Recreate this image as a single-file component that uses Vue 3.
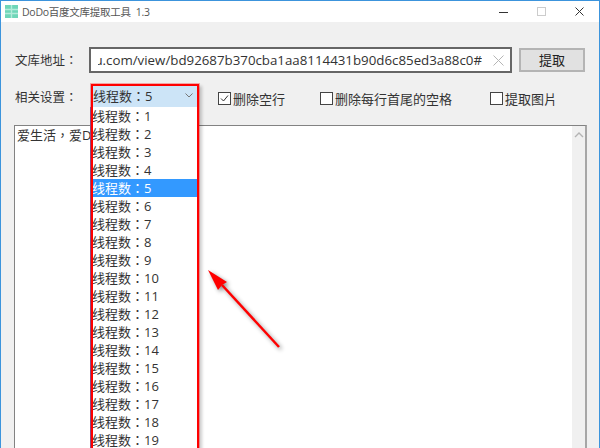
<script setup>
const counts = Array.from({ length: 19 }, (_, i) => i + 1)
</script>

<template>
  <div class="window">
    <header class="titlebar">
      <svg class="logo" width="13" height="13" viewBox="0 0 13 13">
        <rect x="0" y="0" width="13" height="13" fill="#6fd6b8" />
        <path d="M0 4.5h13M0 8.5h13M6.5 0v13" stroke="#b4ebda" stroke-width="1.4" />
      </svg>
      <span class="title">DoDo百度文库提取工具&nbsp;&nbsp;1.3</span>
      <div class="controls">
        <svg width="9" height="9" viewBox="0 0 9 9"><path d="M0 5.5h9" stroke="#333" stroke-width="1" /></svg>
        <svg width="9" height="9" viewBox="0 0 9 9"><rect x=".5" y=".5" width="8" height="8" fill="none" stroke="#ccc" /></svg>
        <svg width="9" height="9" viewBox="0 0 9 9"><path d="M.5 .5l8 8M8.5 .5l-8 8" stroke="#333" stroke-width="1" /></svg>
      </div>
    </header>
    <main class="body">
      <div class="row url-row">
        <label class="label">文库地址：</label>
        <div class="input">
          <div class="url-clip"><span class="url">u.com/view/bd92687b370cba1aa8114431b90d6c85ed3a88c0#</span></div>
          <svg class="clear" width="11" height="11" viewBox="0 0 11 11"><path d="M.5 .5l10 10M10.5 .5l-10 10" stroke="#b5b5b5" stroke-width="1" /></svg>
        </div>
        <button class="fetch">提取</button>
      </div>
      <div class="row settings-row">
        <label class="label">相关设置：</label>
        <div class="select">
          <span>线程数：5</span>
          <svg width="8" height="5" viewBox="0 0 8 5"><path d="M.5 .5L4 4 7.500 .5" fill="none" stroke="#777" /></svg>
        </div>
        <label class="check first"><span class="box"><svg width="11" height="11" viewBox="0 0 11 11"><path d="M2 5.5l2.500 2.500L9 2.500" fill="none" stroke="#333" /></svg></span>删除空行</label>
        <label class="check second"><span class="box"></span>删除每行首尾的空格</label>
        <label class="check third"><span class="box"></span>提取图片</label>
      </div>
      <div class="output">
        <div class="text">爱生活，爱DoDo</div>
        <div class="scrollbar">
          <svg width="10" height="6" viewBox="0 0 10 6"><path d="M1 5l4-4 4 4" fill="none" stroke="#b4b4b4" stroke-width="1.4" /></svg>
        </div>
      </div>
    </main>

    <ul class="list">
      <li v-for="n in counts" :key="n" :class="{ active: n === 5 }">线程数：{{ n }}</li>
    </ul>
    <div class="highlight"></div>
    <svg class="arrow" width="90" height="100" viewBox="0 0 90 100">
      <path d="M77 87L20 25" stroke="#f00" stroke-width="2.500" />
      <path d="M6 10l19 12-5 3-4 5z" fill="#f00" />
    </svg>
  </div>
</template>

<style>
html, body { margin: 0; overflow: hidden; }
</style>

<style scoped>
.window {
  position: relative;
  box-sizing: border-box;
  width: 600px;
  height: 448px;
  overflow: hidden;
  display: flex;
  flex-direction: column;
  background: #f0f0f0;
  border: 1px solid #3c94dc;
  border-bottom: 0;
  font-family: "Open Sans", "Noto Sans CJK TC", sans-serif;
  font-size: 13px;
  color: #333;
}
.titlebar {
  height: 21px;
  flex: none;
  display: flex;
  align-items: center;
  background: #fff;
  padding-left: 4px;
  font-size: 10.5px;
  color: #555;
}
.title { letter-spacing: -.25px; }
.logo { margin-right: 4px; }
.controls {
  margin-left: auto;
  display: flex;
  gap: 29px;
  padding-right: 15px;
}
.body {
  flex: 1;
  min-height: 0;
  display: flex;
  flex-direction: column;
  padding: 25px 12px 0 13px;
}
.row { display: flex; align-items: center; }
.label { width: 75px; flex: none; padding-left: 1px; box-sizing: border-box; font-size: 12.5px; }
.url-row { height: 26px; }
.url-row .label { padding-bottom: 1px; }
.input {
  box-sizing: border-box;
  width: 423px;
  height: 26px;
  background: #fff;
  border: 2px solid #666;
  display: flex;
  align-items: center;
  padding: 0 5px 0 7px;
  font-size: 13.3px;
  overflow: hidden;
}
.url-clip {
  width: 384px;
  flex: none;
  display: flex;
  justify-content: flex-end;
  overflow: hidden;
}
.url { white-space: nowrap; flex: none; }
.clear { margin-left: 11px; flex: none; }
.fetch {
  box-sizing: border-box;
  margin-left: 7px;
  width: 66px;
  height: 24px;
  padding: 0 0 2px;
  background: #e1e1e1;
  border: 2px solid #b4b4b4;
  font: inherit;
  color: #222;
}
.settings-row { height: 24px; margin-top: 11px; }
.select {
  box-sizing: border-box;
  width: 108px;
  height: 24px;
  flex: none;
  margin-left: 1px;
  padding: 0 5px 0 3px;
  display: flex;
  align-items: center;
  justify-content: space-between;
  background: #cce4f7;
  border-bottom: 1px solid #0078d7;
}
.check { display: flex; align-items: center; white-space: nowrap; padding-top: 4px; }
.box {
  box-sizing: border-box;
  width: 13px;
  height: 13px;
  margin-right: 2px;
  display: flex;
  background: #fff;
  border: 1px solid #444;
}
.first { margin-left: 20px; }
.second { margin-left: 35px; }
.third { margin-left: 38px; }
.output {
  box-sizing: border-box;
  margin-top: 17px;
  width: 573px;
  flex: 1;
  min-height: 0;
  display: flex;
  justify-content: space-between;
  background: #fff;
  border: 1px solid #828282;
  border-right: 2px solid #a6a6a6;
  border-bottom: 0;
}
.text { padding: 0 2px; line-height: 19px; }
.scrollbar {
  width: 13px;
  background: #f0f0f0;
  display: flex;
  justify-content: center;
  padding-top: 6px;
}
.list {
  position: absolute;
  left: 89px;
  top: 106px;
  width: 108px;
  margin: 0;
  padding: 0;
  list-style: none;
  background: #fff;
  border-left: 1px solid #5b6fb5;
  box-sizing: border-box;
  line-height: 18px;
}
.list li { height: 18px; padding-left: 1px; white-space: nowrap; }
.list .active { background: #3399ff; color: #fff; }
.highlight {
  position: absolute;
  left: 90px;
  top: 83px;
  width: 104px;
  height: 380px;
  border: 2px solid #f00;
  box-shadow: 0 0 0 1px rgba(255, 0, 0, .3), 3px 2px 3px rgba(0, 0, 0, .2);
}
.arrow {
  position: absolute;
  left: 201px;
  top: 259px;
  filter: drop-shadow(2px 2px 2px rgba(0, 0, 0, .45));
}
</style>
